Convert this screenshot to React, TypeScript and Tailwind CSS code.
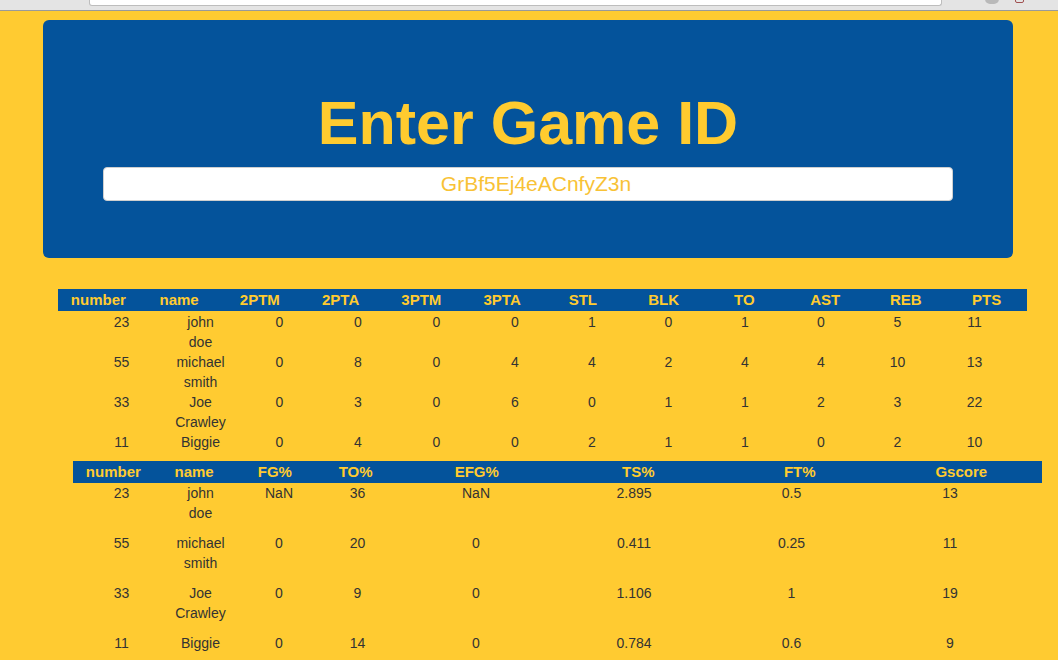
import React from "react";

const box = [
  { num: "23", name: ["john", "doe"], stats: ["0", "0", "0", "0", "1", "0", "1", "0", "5", "11"] },
  { num: "55", name: ["michael", "smith"], stats: ["0", "8", "0", "4", "4", "2", "4", "4", "10", "13"] },
  { num: "33", name: ["Joe", "Crawley"], stats: ["0", "3", "0", "6", "0", "1", "1", "2", "3", "22"] },
  { num: "11", name: ["Biggie"], stats: ["0", "4", "0", "0", "2", "1", "1", "0", "2", "10"] },
];

const adv = [
  { num: "23", name: ["john", "doe"], stats: ["NaN", "36", "NaN", "2.895", "0.5", "13"] },
  { num: "55", name: ["michael", "smith"], stats: ["0", "20", "0", "0.411", "0.25", "11"] },
  { num: "33", name: ["Joe", "Crawley"], stats: ["0", "9", "0", "1.106", "1", "19"] },
  { num: "11", name: ["Biggie"], stats: ["0", "14", "0", "0.784", "0.6", "9"] },
];

const boxHead = ["number", "name", "2PTM", "2PTA", "3PTM", "3PTA", "STL", "BLK", "TO", "AST", "REB", "PTS"];
const advHead = ["number", "name", "FG%", "TO%", "EFG%", "TS%", "FT%", "Gscore"];

function Name({ lines }: { lines: string[] }) {
  return (
    <div className="flex flex-col items-center">
      {lines.map((l) => (
        <span key={l} className="whitespace-nowrap">{l}</span>
      ))}
    </div>
  );
}

export default function App() {
  return (
    <div className="min-h-screen bg-[#ffcb31] font-['Liberation_Sans',Arial,sans-serif] text-[14px] leading-[20px] text-[#333]">
      {/* browser chrome strip */}
      <div className="flex h-[11px] items-start border-b border-[#9a9a9a] bg-[#e4e4e4]">
        <div className="ml-[89px] h-[6px] w-[853px] rounded-b-[3px] border border-t-0 border-[#bdbdbd] bg-white" />
        <div className="ml-[43px] mt-[-6px] h-[10px] w-[14px] rounded-full bg-[#b9b9b9]" />
        <div className="ml-[16px] mt-[-4px] h-[7px] w-[9px] rounded-[2px] border border-[#a05050]" />
      </div>

      {/* jumbotron */}
      <div className="ml-[43px] mt-[9px] w-[970px] rounded-[6px] bg-[#04539b] px-[60px] pt-[70px] pb-[57px]">
        <h1 className="text-center text-[61px] font-bold leading-[67px] text-[#ffcb2f]">Enter Game ID</h1>
        <div className="mt-[10px] flex h-[34px] items-center justify-center rounded-[4px] border border-[#cfcfcf] bg-white pl-[16px] text-[21px] text-[#f8c236]">
          GrBf5Ej4eACnfyZ3n
        </div>
      </div>

      {/* box score */}
      <div className="ml-[58px] mt-[31px] grid h-[22px] w-[969px] grid-cols-12 bg-[#04539b] text-[15px] font-bold leading-[22px] text-[#ffcb2f]">
        {boxHead.map((h) => (
          <div key={h} className="text-center">{h}</div>
        ))}
      </div>
      <div className="ml-[82px] mt-[1px]">
        {box.map((r) => (
          <div key={r.num} className="grid grid-cols-[79px_79px_79px_78px_79px_78px_76px_77px_76px_76px_77px_77px] text-center">
            <div>{r.num}</div>
            <Name lines={r.name} />
            {r.stats.map((s, i) => (
              <div key={i}>{s}</div>
            ))}
          </div>
        ))}
      </div>

      {/* advanced */}
      <div className="ml-[73px] mt-[9px] grid h-[22px] w-[969px] grid-cols-12 bg-[#04539b] text-[15px] font-bold leading-[22px] text-[#ffcb2f]">
        {advHead.map((h, i) => (
          <div key={h} className={i > 3 ? "col-span-2 text-center" : "text-center"}>{h}</div>
        ))}
      </div>
      <div className="ml-[82px]">
        {adv.map((r) => (
          <div key={r.num} className="grid grid-cols-[79px_79px_78px_79px_158px_158px_157px_160px] pb-[10px] text-center">
            <div>{r.num}</div>
            <div className="min-h-[40px]">
              <Name lines={r.name} />
            </div>
            {r.stats.map((s, i) => (
              <div key={i}>{s}</div>
            ))}
          </div>
        ))}
      </div>
    </div>
  );
}
